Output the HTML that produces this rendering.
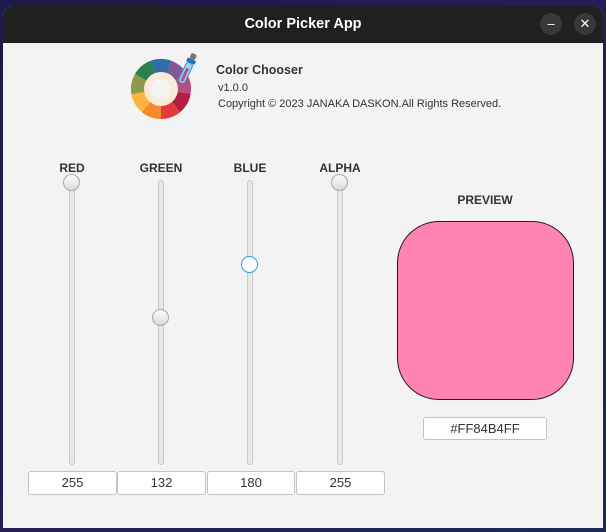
<!DOCTYPE html>
<html><head><meta charset="utf-8"><style>
*{box-sizing:border-box;margin:0;padding:0}
body{width:606px;height:532px;overflow:hidden;background:linear-gradient(135deg,#1c1a4a,#241d55 50%,#1a2a55);font-family:"Liberation Sans",sans-serif;position:relative}
.win{position:absolute;left:3px;top:6px;width:600px;height:522px;background:#f3f3f3;border-radius:10px 10px 0 0;overflow:hidden}
.tb{position:absolute;left:0;top:0;width:600px;height:37px;background:#202020;color:#fff;font-weight:bold;font-size:14.5px;text-align:center;line-height:37px}
.btn{position:absolute;top:7px;width:22px;height:22px;border-radius:50%;background:#383838;color:#fff;text-align:center;line-height:22px;font-size:13px;font-weight:normal}
.a{position:absolute;color:#333;font-size:11px}
.lbl{position:absolute;font-weight:bold;font-size:12px;color:#333;text-align:center;width:80px}
.track{position:absolute;width:6px;top:174px;height:285px;border-radius:3px;background:#e8e8e8;border:1px solid #c8c8c8}
.th{position:absolute;width:17px;height:17px;border-radius:50%;background:linear-gradient(#fbfbfb,#dcdcdc);border:1px solid #a8a8a8}
.tf{position:absolute;top:465px;height:24px;background:#fff;border:1px solid #c4c4c4;border-radius:3px;text-align:center;line-height:22px;font-size:13px;color:#333}
</style></head><body>
<div class="win">
<div class="tb">Color Picker App
<div class="btn" style="left:537px">–</div>
<div class="btn" style="left:571px">✕</div>
</div>
<svg style="position:absolute;left:122px;top:42px" width="90" height="82" viewBox="125 48 90 82">
<g transform="translate(161,89)">
<path d="M0 0 L-10.3 -28.2 A30 30 0 0 1 10.3 -28.2Z" fill="#2e6fa8" transform="rotate(0)"/>
<path d="M0 0 L-10.3 -28.2 A30 30 0 0 1 10.3 -28.2Z" fill="#7f5a94" transform="rotate(40)"/>
<path d="M0 0 L-10.3 -28.2 A30 30 0 0 1 10.3 -28.2Z" fill="#b5507e" transform="rotate(80)"/>
<path d="M0 0 L-10.3 -28.2 A30 30 0 0 1 10.3 -28.2Z" fill="#b01e43" transform="rotate(120)"/>
<path d="M0 0 L-10.3 -28.2 A30 30 0 0 1 10.3 -28.2Z" fill="#e03c3f" transform="rotate(160)"/>
<path d="M0 0 L-10.3 -28.2 A30 30 0 0 1 10.3 -28.2Z" fill="#f7882c" transform="rotate(200)"/>
<path d="M0 0 L-10.3 -28.2 A30 30 0 0 1 10.3 -28.2Z" fill="#fbb540" transform="rotate(240)"/>
<path d="M0 0 L-10.3 -28.2 A30 30 0 0 1 10.3 -28.2Z" fill="#8c9a4b" transform="rotate(280)"/>
<path d="M0 0 L-10.3 -28.2 A30 30 0 0 1 10.3 -28.2Z" fill="#2c8050" transform="rotate(320)"/>
<circle r="17" fill="#fbe9da"/><circle r="10" fill="#f3f3f3"/>
</g>
<g transform="translate(186,72) rotate(25)">
<rect x="-3.5" y="-10" width="7" height="22" rx="3" fill="#9fd0f2" stroke="#3a8ac8" stroke-width="1"/>
<rect x="-1.5" y="-4" width="3" height="14" fill="#b5507e"/>
<rect x="-4.5" y="-14" width="9" height="4" fill="#2e6fa8"/>
<rect x="-3" y="-20" width="6" height="6" rx="2" fill="#777"/>
</g>
</svg>
<div class="a" style="left:213px;top:57px;font-size:12.5px;font-weight:bold">Color Chooser</div>
<div class="a" style="left:215px;top:76px">v1.0.0</div>
<div class="a" style="left:215px;top:92px">Copyright © 2023 JANAKA DASKON.All Rights Reserved.</div>

<div class="lbl" style="left:29px;top:155px">RED</div>
<div class="lbl" style="left:118px;top:155px">GREEN</div>
<div class="lbl" style="left:207px;top:155px">BLUE</div>
<div class="lbl" style="left:297px;top:155px">ALPHA</div>

<div class="track" style="left:66px"></div>
<div class="track" style="left:155px"></div>
<div class="track" style="left:244px"></div>
<div class="track" style="left:334px"></div>
<div class="th" style="left:60px;top:168px"></div>
<div class="th" style="left:149px;top:303px"></div>
<div class="th" style="left:238px;top:250px;background:#fff;border:1.5px solid #2aa3dc"></div>
<div class="th" style="left:328px;top:168px"></div>

<div class="tf" style="left:25px;width:89px">255</div>
<div class="tf" style="left:114px;width:89px">132</div>
<div class="tf" style="left:204px;width:88px">180</div>
<div class="tf" style="left:293px;width:89px">255</div>

<div class="lbl" style="left:442px;top:187px">PREVIEW</div>
<div style="position:absolute;left:394px;top:215px;width:177px;height:179px;border-radius:42px;background:#ff84b4;border:1.5px solid #2a1a22"></div>
<div class="tf" style="left:420px;top:411px;width:124px;height:23px;line-height:21px">#FF84B4FF</div>
</div>
</body></html>
